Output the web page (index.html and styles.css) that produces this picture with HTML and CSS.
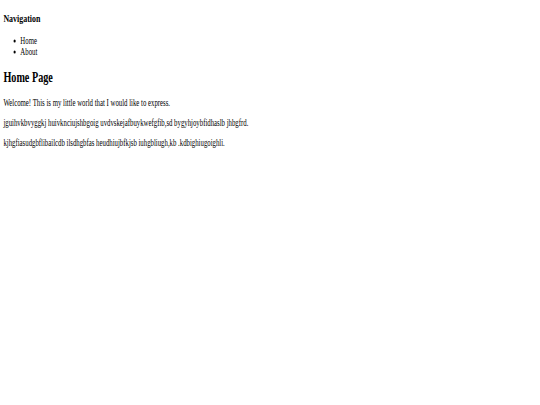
FILE: index.html
```html
<!DOCTYPE html>
<html>
<head>
<meta charset="utf-8">
<title>Home Page</title>
<link rel="stylesheet" href="styles.css">
</head>
<body>
<div class="page">
  <nav>
    <h3>Navigation</h3>
    <ul>
      <li>Home</li>
      <li>About</li>
    </ul>
  </nav>
  <h2>Home Page</h2>
  <p>Welcome! This is my little world that I would like to express.</p>
  <p>jguihvkbvyggkj huivknciujshbgoig uvdvskejafbuykwefgfib,sd bygyhjoybfidhaslb jhbgfrd.</p>
  <p>kjhgfiasudgbflibailcdb ilsdhgbfas heudhiujbfkjsb iuhgbliugh,kb .kdbighiugoighli.</p>
</div>
</body>
</html>
```

FILE: styles.css
```css
html, body {
  margin: 0;
  background: #ffffff;
}
body {
  overflow: hidden;
}
.page {
  display: flow-root;
  width: 1270px;
  padding: 0 8px;
  box-sizing: border-box;
  font-family: "Liberation Serif", "Times New Roman", serif;
  font-size: 16px;
  color: #000;
  transform: scale(0.424, 0.6);
  transform-origin: 0 0;
}
```
